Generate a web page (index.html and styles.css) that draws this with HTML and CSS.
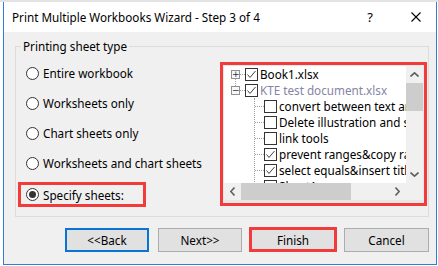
FILE: index.html
```html
<!DOCTYPE html>
<html lang="en">
<head>
  <meta charset="UTF-8">
  <title>Print Multiple Workbooks Wizard</title>
  <link rel="stylesheet" href="styles.css">
</head>
<body>
  <div class="sheet-edge"></div>
  <div class="window">
    <div class="titlebar">
      <span class="title">Print Multiple Workbooks Wizard - Step 3 of 4</span>
      <span class="help">?</span>
      <svg class="close" width="10" height="10" viewBox="0 0 10 10"><path d="M0.5 0.5L9.5 9.5M9.5 0.5L0.5 9.5" stroke="#000" stroke-width="1.1"/></svg>
    </div>

    <div class="dialog">
      <fieldset class="group">
        <legend>Printing sheet type</legend>
        <div class="group-body">
          <div class="options">
            <label class="opt"><span class="radio"></span>Entire workbook</label>
            <label class="opt"><span class="radio"></span>Worksheets only</label>
            <label class="opt"><span class="radio"></span>Chart sheets only</label>
            <label class="opt"><span class="radio"></span>Worksheets and chart sheets</label>
            <label class="opt opt-marked"><span class="radio on"></span>Specify sheets:</label>
          </div>

          <div class="tree-frame">
            <div class="tree">
              <div class="tree-view">
                <div class="node root first">
                  <span class="exp">+</span><span class="hline"></span><span class="cb on"></span><span class="txt">Book1.xlsx</span>
                </div>
                <div class="node root">
                  <span class="exp">−</span><span class="hline"></span><span class="cb on"></span><span class="txt grey">KTE test document.xlsx</span>
                </div>
                <div class="children">
                  <div class="node"><span class="hline"></span><span class="cb"></span><span class="txt">convert between text and number</span></div>
                  <div class="node"><span class="hline"></span><span class="cb"></span><span class="txt">Delete illustration and shapes</span></div>
                  <div class="node"><span class="hline"></span><span class="cb"></span><span class="txt">link tools</span></div>
                  <div class="node"><span class="hline"></span><span class="cb on"></span><span class="txt">prevent ranges&amp;copy ranges</span></div>
                  <div class="node"><span class="hline"></span><span class="cb on"></span><span class="txt">select equals&amp;insert titles</span></div>
                  <div class="node"><span class="hline"></span><span class="cb"></span><span class="txt">Sheet1</span></div>
                </div>
              </div>
              <div class="vscroll">
                <span class="arrow up"><svg width="9" height="5" viewBox="0 0 9 5"><path d="M0.5 4.5L4.5 0.8L8.5 4.5" fill="none" stroke="#606060" stroke-width="1.6"/></svg></span>
                <span class="vthumb"></span>
                <span class="spacer"></span>
                <span class="arrow down"><svg width="9" height="5" viewBox="0 0 9 5"><path d="M0.5 0.5L4.5 4.2L8.5 0.5" fill="none" stroke="#606060" stroke-width="1.6"/></svg></span>
              </div>
              <div class="hscroll">
                <span class="arrow"><svg width="5" height="9" viewBox="0 0 5 9"><path d="M4.5 0.5L0.8 4.5L4.5 8.5" fill="none" stroke="#606060" stroke-width="1.6"/></svg></span>
                <span class="hthumb"></span>
                <span class="spacer"></span>
                <span class="arrow"><svg width="5" height="9" viewBox="0 0 5 9"><path d="M0.5 0.5L4.2 4.5L0.5 8.5" fill="none" stroke="#606060" stroke-width="1.6"/></svg></span>
              </div>
              <div class="corner"></div>
            </div>
          </div>
        </div>
      </fieldset>

      <div class="buttons">
        <button class="btn btn-default">&lt;&lt;Back</button>
        <button class="btn">Next&gt;&gt;</button>
        <button class="btn btn-marked">Finish</button>
        <button class="btn btn-cancel">Cancel</button>
      </div>
    </div>
  </div>
</body>
</html>
```

FILE: styles.css
```css
body {
  margin: 0;
  width: 438px;
  height: 266px;
  overflow: hidden;
  background: #fff;
  font-family: "Segoe UI", "Noto Sans", sans-serif;
  font-size: 11.7px;
  color: #000;
}

.sheet-edge {
  height: 2px;
  background: #e3e3e3;
}

.window {
  margin-left: 3px;
  width: 432px;
  border: 1px solid #2b7fd4;
  border-top: none;
}

/* title bar */
.titlebar {
  height: 30px;
  background: #fff;
  display: flex;
  align-items: center;
  padding: 0 15px 0 8px;
}

.title {
  flex: 1;
}

.help {
  font-size: 13px;
  margin-right: 38px;
}

.close {
  display: block;
}

/* dialog body */
.dialog {
  background: #f0f0f0;
  height: 232px;
  padding: 6px 7px 0 11px;
  box-sizing: border-box;
}

.group {
  margin: 0;
  padding: 8px 1px 0 10px;
  border: 1px solid #dcdcdc;
  height: 179px;
  box-sizing: border-box;
}

.group legend {
  margin-left: -5px;
  padding: 0 2px;
  line-height: 16px;
}

.group-body {
  display: flex;
  justify-content: space-between;
}

/* radio options */
.options {
  display: flex;
  flex-direction: column;
  gap: 8px;
}

.opt {
  height: 22px;
  display: flex;
  align-items: center;
  gap: 4px;
  white-space: nowrap;
}

.radio {
  width: 11px;
  height: 11px;
  border: 1px solid #333;
  border-radius: 50%;
  background: #fff;
  display: flex;
  align-items: center;
  justify-content: center;
  flex: none;
}

.radio.on::after {
  content: "";
  width: 7px;
  height: 7px;
  border-radius: 50%;
  background: #333;
}

.opt-marked {
  margin-left: -8px;
  width: 128px;
  height: 25px;
  box-sizing: border-box;
  border: 3px solid #f23b3b;
  padding-left: 5px;
}

/* sheet tree */
.tree-frame {
  width: 207px;
  height: 144px;
  box-sizing: border-box;
  border: 3px solid #f23b3b;
  background: #f0f0f0;
}

.tree {
  height: 100%;
  box-sizing: border-box;
  border: 1px solid #e8e8e8;
  border-bottom-width: 3px;
  display: grid;
  grid-template-columns: 182px 17px;
  grid-template-rows: 117px 17px;
}

.tree-view {
  background: #fff;
  overflow: hidden;
  white-space: nowrap;
}

.node {
  height: 16px;
  display: flex;
  align-items: center;
  position: relative;
}

.node.root {
  padding-left: 7px;
}

.exp {
  width: 7px;
  height: 7px;
  border: 1px solid #919191;
  background: #f7f7f7;
  font-size: 9px;
  line-height: 7px;
  text-align: center;
  color: #2a2a55;
  font-family: "DejaVu Sans", sans-serif;
  flex: none;
}

.root.first .exp::after {
  content: "";
  position: absolute;
  left: 11px;
  top: 12px;
  height: 8px;
  border-left: 1px dotted #a0a0a0;
}

.hline {
  width: 5px;
  border-top: 1px dotted #a0a0a0;
  flex: none;
}

.cb {
  width: 11px;
  height: 11px;
  border: 1px solid #333;
  background: #fff;
  flex: none;
}

.cb.on {
  background: #fff url("data:image/svg+xml;utf8,<svg xmlns='http://www.w3.org/2000/svg' width='11' height='11'><path d='M1.5 5.5L4 8.5L9.5 2' fill='none' stroke='%23444' stroke-width='1'/></svg>") no-repeat;
}

.txt {
  margin-left: 2px;
  flex: none;
}

.txt.grey {
  color: #8585a3;
}

.children {
  margin-left: 30px;
  border-left: 1px dotted #a0a0a0;
}

.children .hline {
  width: 9px;
}

/* scrollbars */
.vscroll,
.hscroll {
  background: #f0f0f0;
  display: flex;
}

.vscroll {
  flex-direction: column;
}

.arrow {
  width: 17px;
  height: 17px;
  display: flex;
  align-items: center;
  justify-content: center;
  flex: none;
}

.vthumb {
  height: 28px;
  background: #cdcdcd;
}

.hthumb {
  width: 110px;
  background: #cdcdcd;
}

.spacer {
  flex: 1;
}

.corner {
  background: #f0f0f0;
}

/* buttons */
.buttons {
  display: flex;
  justify-content: flex-end;
  gap: 9px;
  margin-top: 11px;
}

.btn {
  width: 84px;
  height: 24px;
  box-sizing: border-box;
  background: #e1e1e1;
  border: 1px solid #adadad;
  font-family: "Segoe UI", "Noto Sans", sans-serif;
  font-size: 11.7px;
  color: #000;
  padding: 0;
}

.btn-default {
  border: 2px solid #0a74d6;
}

.btn-marked {
  border: 3px solid #f23b3b;
  width: 88px;
  margin: -1px -2px 0;
  height: 25px;
}

.btn-cancel {
  width: 85px;
}
```
